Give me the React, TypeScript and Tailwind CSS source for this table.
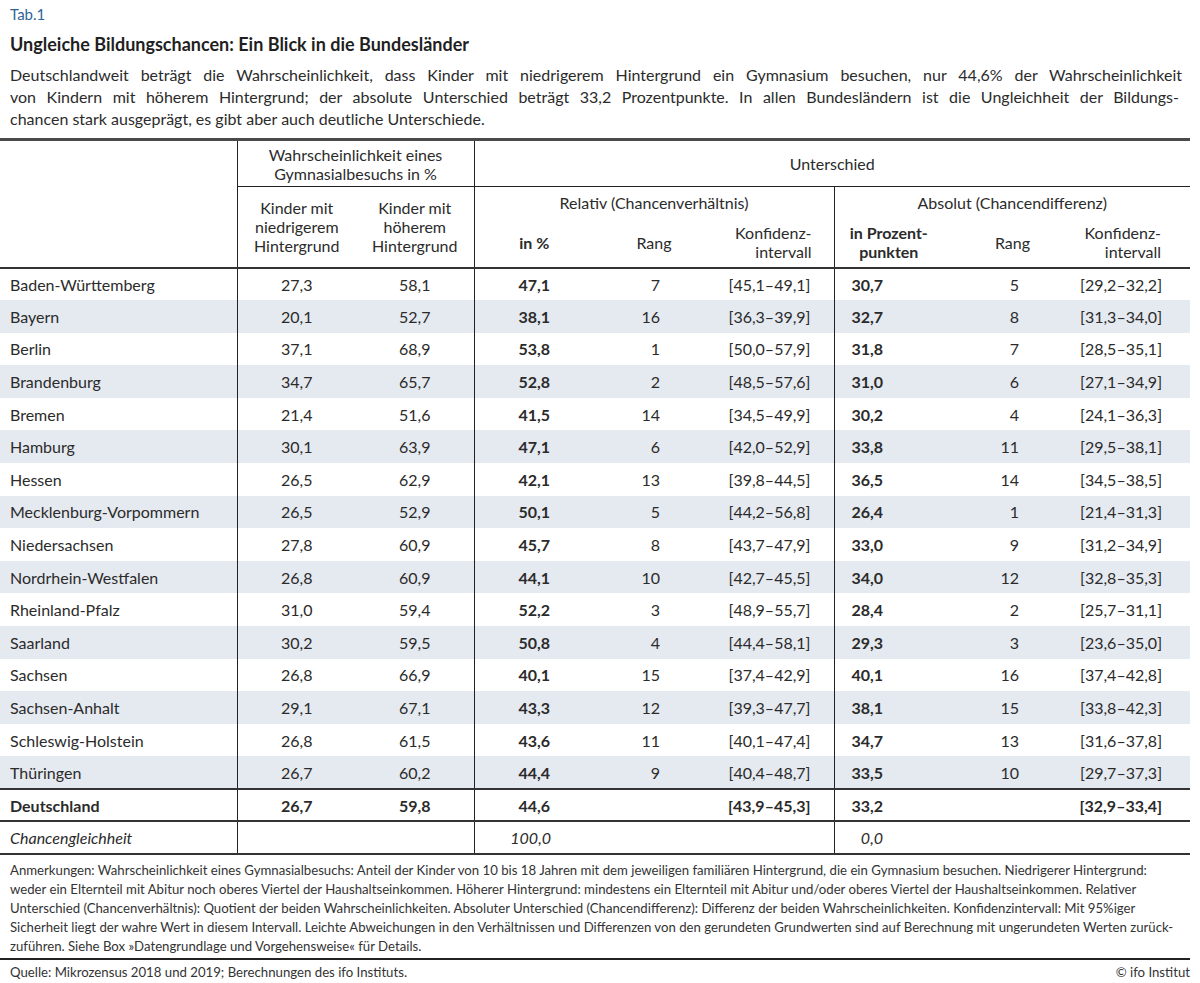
import React from "react";

type Row = [string, string, string, string, string, string, string, string, string];

const rows: Row[] = [
  ["Baden-Württemberg", "27,3", "58,1", "47,1", "7", "[45,1–49,1]", "30,7", "5", "[29,2–32,2]"],
  ["Bayern", "20,1", "52,7", "38,1", "16", "[36,3–39,9]", "32,7", "8", "[31,3–34,0]"],
  ["Berlin", "37,1", "68,9", "53,8", "1", "[50,0–57,9]", "31,8", "7", "[28,5–35,1]"],
  ["Brandenburg", "34,7", "65,7", "52,8", "2", "[48,5–57,6]", "31,0", "6", "[27,1–34,9]"],
  ["Bremen", "21,4", "51,6", "41,5", "14", "[34,5–49,9]", "30,2", "4", "[24,1–36,3]"],
  ["Hamburg", "30,1", "63,9", "47,1", "6", "[42,0–52,9]", "33,8", "11", "[29,5–38,1]"],
  ["Hessen", "26,5", "62,9", "42,1", "13", "[39,8–44,5]", "36,5", "14", "[34,5–38,5]"],
  ["Mecklenburg-Vorpommern", "26,5", "52,9", "50,1", "5", "[44,2–56,8]", "26,4", "1", "[21,4–31,3]"],
  ["Niedersachsen", "27,8", "60,9", "45,7", "8", "[43,7–47,9]", "33,0", "9", "[31,2–34,9]"],
  ["Nordrhein-Westfalen", "26,8", "60,9", "44,1", "10", "[42,7–45,5]", "34,0", "12", "[32,8–35,3]"],
  ["Rheinland-Pfalz", "31,0", "59,4", "52,2", "3", "[48,9–55,7]", "28,4", "2", "[25,7–31,1]"],
  ["Saarland", "30,2", "59,5", "50,8", "4", "[44,4–58,1]", "29,3", "3", "[23,6–35,0]"],
  ["Sachsen", "26,8", "66,9", "40,1", "15", "[37,4–42,9]", "40,1", "16", "[37,4–42,8]"],
  ["Sachsen-Anhalt", "29,1", "67,1", "43,3", "12", "[39,3–47,7]", "38,1", "15", "[33,8–42,3]"],
  ["Schleswig-Holstein", "26,8", "61,5", "43,6", "11", "[40,1–47,4]", "34,7", "13", "[31,6–37,8]"],
  ["Thüringen", "26,7", "60,2", "44,4", "9", "[40,4–48,7]", "33,5", "10", "[29,7–37,3]"],
];

function DataRow({ r, shaded }: { r: Row; shaded: boolean }) {
  return (
    <tr className={`h-[32.6px] ${shaded ? "bg-[#e5e9f0]" : "bg-white"}`}>
      <td className="pl-[10px] text-left border-r border-[#222]">{r[0]}</td>
      <td className="text-center">{r[1]}</td>
      <td className="text-center border-r border-[#222]">{r[2]}</td>
      <td className="text-center font-bold">{r[3]}</td>
      <td className="text-right pr-[54px]">{r[4]}</td>
      <td className="text-right pr-[23px] border-r border-[#222]">{r[5]}</td>
      <td className="text-right pr-[70px] font-bold">{r[6]}</td>
      <td className="text-right pr-[53px]">{r[7]}</td>
      <td className="text-right pr-[28px]">{r[8]}</td>
    </tr>
  );
}

export default function App() {
  return (
    <div
      className="w-[1200px] bg-white text-[#2b2b2b]"
      style={{ fontFamily: "Lato, 'Open Sans', sans-serif" }}
    >
      <div className="w-[1190px]">
        <div className="pl-[10px] pt-[4px] text-[15px] leading-[20px] text-[#2f6496]">Tab.1</div>
        <div className="pl-[10px] pt-[9px] text-[18px] leading-[22px] font-bold text-[#1f1f1f]">
          Ungleiche Bildungschancen: Ein Blick in die Bundesländer
        </div>
        <div className="pl-[10px] pr-[8px] pt-[9px] pb-[8px] text-[16px] leading-[22px]">
          <div className="whitespace-nowrap text-justify [text-align-last:justify]">
            Deutschlandweit beträgt die Wahrscheinlichkeit, dass Kinder mit niedrigerem Hintergrund ein Gymnasium besuchen, nur 44,6% der Wahrscheinlichkeit
          </div>
          <div className="whitespace-nowrap text-justify [text-align-last:justify] pr-[3px]">
            von Kindern mit höherem Hintergrund; der absolute Unterschied beträgt 33,2 Prozentpunkte. In allen Bundesländern ist die Ungleichheit der Bildungs-
          </div>
          <div className="whitespace-nowrap">chancen stark ausgeprägt, es gibt aber auch deutliche Unterschiede.</div>
        </div>

        <table className="w-[1190px] table-fixed border-collapse text-[16px] leading-[19px]">
          <colgroup>
            <col className="w-[237px]" />
            <col className="w-[119px]" />
            <col className="w-[118px]" />
            <col className="w-[120px]" />
            <col className="w-[120px]" />
            <col className="w-[120px]" />
            <col className="w-[119px]" />
            <col className="w-[119px]" />
            <col className="w-[118px]" />
          </colgroup>
          <thead>
            <tr className="h-[47px] border-t-[3px] border-[#4a4a4a]">
              <th rowSpan={3} className="border-r border-[#222] border-b-2 border-b-[#333]"></th>
              <th colSpan={2} className="font-normal text-center border-r border-[#222] border-b border-b-[#222] leading-[19px]">
                Wahrscheinlichkeit eines
                <br />
                Gymnasialbesuchs in %
              </th>
              <th colSpan={6} className="font-normal text-center border-b border-b-[#222]">
                Unterschied
              </th>
            </tr>
            <tr className="h-[31px]">
              <th rowSpan={2} className="font-normal text-center align-middle leading-[19px] border-b-2 border-b-[#333]">
                Kinder mit
                <br />
                niedrigerem
                <br />
                Hintergrund
              </th>
              <th rowSpan={2} className="font-normal text-center align-middle leading-[19px] border-r border-[#222] border-b-2 border-b-[#333]">
                Kinder mit
                <br />
                höherem
                <br />
                Hintergrund
              </th>
              <th colSpan={3} className="font-normal text-center border-r border-[#222]">
                Relativ (Chancenverhältnis)
              </th>
              <th colSpan={3} className="font-normal text-center">
                Absolut (Chancendifferenz)
              </th>
            </tr>
            <tr className="h-[50px]">
              <th className="font-bold text-center border-b-2 border-b-[#333]">in %</th>
              <th className="font-normal text-center border-b-2 border-b-[#333]">Rang</th>
              <th className="font-normal text-right pr-[22px] leading-[19px] border-r border-[#222] border-b-2 border-b-[#333]">
                Konfidenz-
                <br />
                intervall
              </th>
              <th className="font-bold text-center pr-[10px] leading-[19px] border-b-2 border-b-[#333]">
                in Prozent-
                <br />
                punkten
              </th>
              <th className="font-normal text-center border-b-2 border-b-[#333]">Rang</th>
              <th className="font-normal text-right pr-[29px] leading-[19px] border-b-2 border-b-[#333]">
                Konfidenz-
                <br />
                intervall
              </th>
            </tr>
          </thead>
          <tbody>
            {rows.map((r, i) => (
              <DataRow key={r[0]} r={r} shaded={i % 2 === 1} />
            ))}
            <tr className="h-[32px] font-bold border-t-2 border-[#333]">
              <td className="pl-[10px] text-left border-r border-[#222]">Deutschland</td>
              <td className="text-center">26,7</td>
              <td className="text-center border-r border-[#222]">59,8</td>
              <td className="text-center">44,6</td>
              <td></td>
              <td className="text-right pr-[23px] border-r border-[#222]">[43,9–45,3]</td>
              <td className="text-right pr-[70px]">33,2</td>
              <td></td>
              <td className="text-right pr-[28px]">[32,9–33,4]</td>
            </tr>
            <tr className="h-[33px] italic border-t-2 border-b-2 border-[#333]">
              <td className="pl-[10px] text-left border-r border-[#222]">Chancengleichheit</td>
              <td></td>
              <td className="border-r border-[#222]"></td>
              <td className="text-right pr-[43px]">100,0</td>
              <td></td>
              <td className="border-r border-[#222]"></td>
              <td className="text-right pr-[70px]">0,0</td>
              <td></td>
              <td></td>
            </tr>
          </tbody>
        </table>

        <div className="pl-[10px] pt-[6px] pb-[2px] text-[13.2px] leading-[19px] text-[#333] border-b-2 border-[#222]">
          <div className="whitespace-nowrap">
            Anmerkungen: Wahrscheinlichkeit eines Gymnasialbesuchs: Anteil der Kinder von 10 bis 18 Jahren mit dem jeweiligen familiären Hintergrund, die ein Gymnasium besuchen. Niedrigerer Hintergrund:
          </div>
          <div className="whitespace-nowrap">
            weder ein Elternteil mit Abitur noch oberes Viertel der Haushaltseinkommen. Höherer Hintergrund: mindestens ein Elternteil mit Abitur und/oder oberes Viertel der Haushaltseinkommen. Relativer
          </div>
          <div className="whitespace-nowrap">
            Unterschied (Chancenverhältnis): Quotient der beiden Wahrscheinlichkeiten. Absoluter Unterschied (Chancendifferenz): Differenz der beiden Wahrscheinlichkeiten. Konfidenzintervall: Mit 95%iger
          </div>
          <div className="whitespace-nowrap">
            Sicherheit liegt der wahre Wert in diesem Intervall. Leichte Abweichungen in den Verhältnissen und Differenzen von den gerundeten Grundwerten sind auf Berechnung mit ungerundeten Werten zurück-
          </div>
          <div className="whitespace-nowrap">zuführen. Siehe Box »Datengrundlage und Vorgehensweise« für Details.</div>
        </div>
        <div className="flex justify-between pl-[10px] pt-[3px] text-[13.2px] leading-[19px] text-[#333]">
          <span>Quelle: Mikrozensus 2018 und 2019; Berechnungen des ifo Instituts.</span>
          <span>© ifo Institut</span>
        </div>
      </div>
    </div>
  );
}
